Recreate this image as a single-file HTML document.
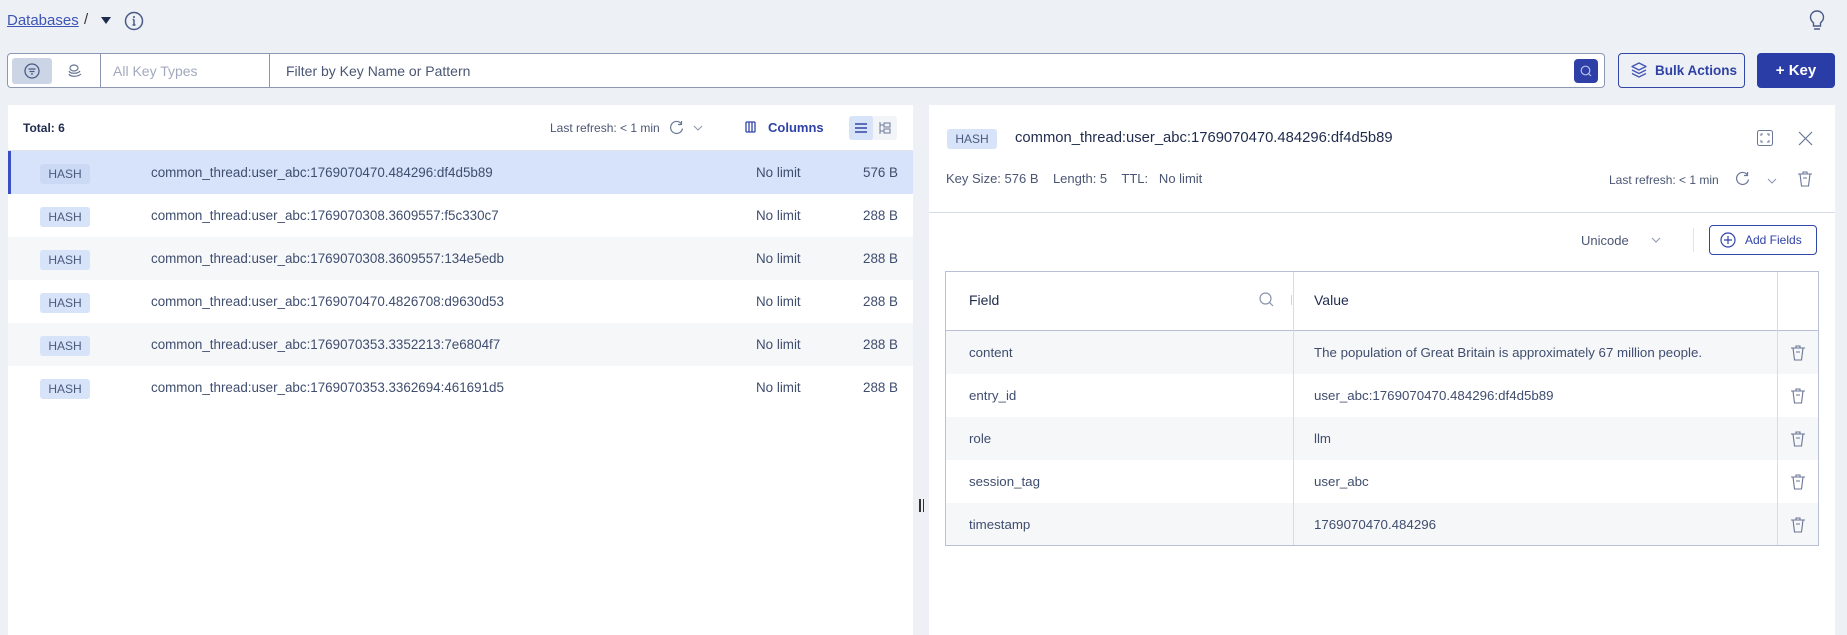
<!DOCTYPE html>
<html><head><meta charset="utf-8"><style>
*{box-sizing:border-box;margin:0;padding:0}
body{width:1847px;height:635px;background:#edf0f5;font-family:"Liberation Sans",sans-serif;color:#415073;position:relative;overflow:hidden;font-size:14px}
.a{position:absolute}
.badge{position:absolute;background:#d7e3f8;color:#4b5b7e;font-size:12px;border-radius:3px;text-align:center;line-height:20px;width:50px;height:20px}
.row{position:absolute;left:8px;width:905px;height:43px}
.row span{position:absolute;top:14px;font-size:13.4px;color:#3f4d6e}
.trow{position:absolute;left:946px;width:872px;height:43px}
.trow span{position:absolute;top:14px;font-size:13.3px;color:#3f4d6e}
svg{position:absolute;overflow:visible}
</style></head><body>
<div class="a" style="left:7px;top:12px;font-size:15px;color:#3c55b6;text-decoration:underline">Databases</div>
<div class="a" style="left:84px;top:11px;font-size:15px;color:#333">/</div>
<svg style="left:101px;top:17px" width="10" height="8"><path d="M0 0H10L5 7Z" fill="#1f2b4d"/></svg>
<svg style="left:124px;top:11px" width="20" height="20"><circle cx="10" cy="10" r="8.5" fill="none" stroke="#4a5a85" stroke-width="1.5"/><path d="M10 8.5V14M8.5 14H11.5M8.7 8.5H10" stroke="#4a5a85" stroke-width="1.5" fill="none"/><circle cx="10" cy="6" r="1" fill="#4a5a85"/></svg>
<svg style="left:1808px;top:10px" width="18" height="22"><path d="M9 1C5 1 2.5 4 2.5 7.5C2.5 10 4 11.5 5.5 13V16H12.5V13C14 11.5 15.5 10 15.5 7.5C15.5 4 13 1 9 1ZM6 19H12" stroke="#4a5a85" stroke-width="1.4" fill="none"/></svg>

<div class="a" style="left:7px;top:53px;width:1598px;height:35px;background:#fff;border:1px solid #8d97b5;border-radius:4px"></div>
<div class="a" style="left:12px;top:58px;width:40px;height:26px;background:#cbd5e5;border-radius:3px"></div>
<svg style="left:24px;top:63px" width="16" height="16"><circle cx="8" cy="8" r="7" fill="none" stroke="#4a5a85" stroke-width="1.3"/><path d="M4.5 6H11.5M5.5 8.5H10.5M7 11H9" stroke="#4a5a85" stroke-width="1.3"/></svg>
<svg style="left:67px;top:63px" width="16" height="16"><ellipse cx="7" cy="5" rx="4" ry="3" fill="none" stroke="#6a7696" stroke-width="1.2"/><path d="M2 8C3 11 11 11 13 8M2 11C3 14 11 14 14 11" stroke="#6a7696" stroke-width="1.2" fill="none"/></svg>
<div class="a" style="left:100px;top:54px;width:1px;height:33px;background:#8d97b5"></div>
<div class="a" style="left:113px;top:63px;color:#a1a9bd;font-size:14px">All Key Types</div>
<div class="a" style="left:269px;top:54px;width:1px;height:33px;background:#8d97b5"></div>
<div class="a" style="left:286px;top:63px;color:#4a5673;font-size:14px">Filter by Key Name or Pattern</div>
<div class="a" style="left:1574px;top:59px;width:24px;height:24px;background:#2e40a8;border-radius:4px"></div>
<svg style="left:1580px;top:65px" width="12" height="12"><circle cx="5.5" cy="5.5" r="4.3" fill="none" stroke="#b8c3ea" stroke-width="1.2"/><path d="M8.5 8.5L11 11" stroke="#b8c3ea" stroke-width="1.2"/></svg>
<div class="a" style="left:1618px;top:53px;width:127px;height:35px;border:1px solid #3246a6;border-radius:4px;background:#edf0f5"></div>
<svg style="left:1631px;top:62px" width="16" height="16"><path d="M8 1L15 4.5L8 8L1 4.5Z M1 8L8 11.5L15 8 M1 11.5L8 15L15 11.5" fill="none" stroke="#4556b5" stroke-width="1.3" stroke-linejoin="round"/></svg>
<div class="a" style="left:1655px;top:63px;color:#2f42a5;font-size:13.5px;font-weight:bold">Bulk Actions</div>
<div class="a" style="left:1757px;top:53px;width:78px;height:35px;background:#2a3ca6;border-radius:4px;color:#fff;font-weight:bold;font-size:15px;text-align:center;line-height:35px">+ Key</div>

<!-- left panel -->
<div class="a" style="left:8px;top:105px;width:905px;height:530px;background:#fff"></div>
<div class="a" style="left:23px;top:121px;font-size:12px;color:#1f2b4d;font-weight:bold">Total: 6</div>
<div class="a" style="left:550px;top:121px;font-size:12px;color:#4a5673">Last refresh: &lt; 1 min</div>
<svg style="left:670px;top:120px" width="14" height="14"><path d="M11.5 4A6 6 0 1 0 12.5 8.5M11.5 1V4.5H8" fill="none" stroke="#6a7696" stroke-width="1.2"/></svg>
<svg style="left:694px;top:126px" width="8" height="5"><path d="M0 0L4 4L8 0" fill="none" stroke="#8a94ad" stroke-width="1"/></svg>
<svg style="left:745px;top:121px" width="12" height="12"><path d="M1 1V11M4 1V11M7 1V11M10 1V11M1 1H10M1 11H10" fill="none" stroke="#3246a6" stroke-width="1.3"/></svg>
<div class="a" style="left:768px;top:120px;font-size:13px;color:#2f42a5;font-weight:bold">Columns</div>
<div class="a" style="left:849px;top:116px;width:48px;height:24px;background:#f3f4f7;border-radius:3px"></div>
<div class="a" style="left:849px;top:116px;width:24px;height:24px;background:#d7e3f8;border-radius:3px"></div>
<svg style="left:855px;top:122px" width="12" height="12"><path d="M0 2H12M0 6H12M0 10H12" stroke="#3246a6" stroke-width="1.5"/></svg>
<svg style="left:879px;top:122px" width="12" height="12"><path d="M1 0V12M1 3H5M1 9H5M5 1H11V5H5ZM5 7H11V11H5Z" fill="none" stroke="#6a7696" stroke-width="1"/></svg>
<div class="a" style="left:8px;top:150px;width:905px;height:1px;background:#dfe4ee"></div>

<div class="row" style="top:151px;background:#d6e3fa;border-left:3px solid #3a4fc4"><div class="badge" style="left:29px;top:13px;background:#cbd9f4">HASH</div><span style="left:140px">common_thread:user_abc:1769070470.484296:df4d5b89</span><span style="left:745px">No limit</span><span style="right:15px">576 B</span></div>
<div class="row" style="top:194px;background:#fff"><div class="badge" style="left:32px;top:13px">HASH</div><span style="left:143px">common_thread:user_abc:1769070308.3609557:f5c330c7</span><span style="left:748px">No limit</span><span style="right:15px">288 B</span></div>
<div class="row" style="top:237px;background:#f6f7f9"><div class="badge" style="left:32px;top:13px">HASH</div><span style="left:143px">common_thread:user_abc:1769070308.3609557:134e5edb</span><span style="left:748px">No limit</span><span style="right:15px">288 B</span></div>
<div class="row" style="top:280px;background:#fff"><div class="badge" style="left:32px;top:13px">HASH</div><span style="left:143px">common_thread:user_abc:1769070470.4826708:d9630d53</span><span style="left:748px">No limit</span><span style="right:15px">288 B</span></div>
<div class="row" style="top:323px;background:#f6f7f9"><div class="badge" style="left:32px;top:13px">HASH</div><span style="left:143px">common_thread:user_abc:1769070353.3352213:7e6804f7</span><span style="left:748px">No limit</span><span style="right:15px">288 B</span></div>
<div class="row" style="top:366px;background:#fff"><div class="badge" style="left:32px;top:13px">HASH</div><span style="left:143px">common_thread:user_abc:1769070353.3362694:461691d5</span><span style="left:748px">No limit</span><span style="right:15px">288 B</span></div>

<div class="a" style="left:919px;top:499px;width:1.5px;height:13px;background:#333"></div>
<div class="a" style="left:922.5px;top:499px;width:1.5px;height:13px;background:#333"></div>

<!-- right panel -->
<div class="a" style="left:929px;top:105px;width:906px;height:530px;background:#fff"></div>
<div class="badge" style="left:947px;top:129px;width:50px">HASH</div>
<div class="a" style="left:1015px;top:130px;font-size:14.8px;color:#1f2b4d">common_thread:user_abc:1769070470.484296:df4d5b89</div>
<svg style="left:1757px;top:130px" width="16" height="16"><rect x="0.5" y="0.5" width="15" height="15" rx="2" fill="none" stroke="#6a7696"/><path d="M4 6V4H6M10 4H12V6M12 10V12H10M6 12H4V10" fill="none" stroke="#6a7696"/></svg>
<svg style="left:1799px;top:132px" width="13" height="13"><path d="M0 0L13 13M13 0L0 13" stroke="#6a7696" stroke-width="1.2"/></svg>
<div class="a" style="left:946px;top:171px;font-size:13px;color:#4a5673">Key Size: 576 B &nbsp;&nbsp; Length: 5 &nbsp;&nbsp; TTL: &nbsp; No limit</div>
<div class="a" style="left:1609px;top:173px;font-size:12px;color:#4a5673">Last refresh: &lt; 1 min</div>
<svg style="left:1736px;top:171px" width="14" height="14"><path d="M11.5 4A6 6 0 1 0 12.5 8.5M11.5 1V4.5H8" fill="none" stroke="#6a7696" stroke-width="1.2"/></svg>
<svg style="left:1768px;top:179px" width="8" height="5"><path d="M0 0L4 4L8 0" fill="none" stroke="#8a94ad" stroke-width="1"/></svg>
<svg style="left:1798px;top:171px" width="14" height="16"><path d="M0 3H14M5 3V1H9V3M2 3L3.5 15H10.5L12 3M5 7H9" fill="none" stroke="#6a7696" stroke-width="1.1"/></svg>
<div class="a" style="left:929px;top:212px;width:906px;height:1px;background:#d6dcea"></div>
<div class="a" style="left:1581px;top:233px;font-size:13px;color:#4a5673">Unicode</div>
<svg style="left:1652px;top:238px" width="8" height="5"><path d="M0 0L4 4L8 0" fill="none" stroke="#8a94ad" stroke-width="1"/></svg>
<div class="a" style="left:1693px;top:228px;width:1px;height:24px;background:#dfe4ee"></div>
<div class="a" style="left:1709px;top:225px;width:108px;height:30px;border:1px solid #3246a6;border-radius:4px"></div>
<svg style="left:1720px;top:232px" width="16" height="16"><circle cx="8" cy="8" r="7" fill="none" stroke="#3246a6" stroke-width="1.2"/><path d="M8 4V12M4 8H12" stroke="#3246a6" stroke-width="1.2"/></svg>
<div class="a" style="left:1745px;top:233px;font-size:12px;color:#2f42a5">Add Fields</div>

<div class="a" style="left:969px;top:292px;font-size:14px;color:#1f2b4d">Field</div>
<svg style="left:1259px;top:292px" width="16" height="16"><circle cx="6.5" cy="6.5" r="5.5" fill="none" stroke="#8a94ad" stroke-width="1.2"/><path d="M10.5 10.5L14 14" stroke="#8a94ad" stroke-width="1.2"/></svg>
<div class="a" style="left:1291px;top:295px;width:1px;height:10px;background:#cfd5e2"></div>
<div class="a" style="left:1314px;top:292px;font-size:14px;color:#1f2b4d">Value</div>
<div class="a" style="left:946px;top:330px;width:872px;height:1px;background:#b7c0d6"></div>

<div class="trow" style="top:331px;background:#f6f7f9"><span style="left:23px">content</span><span style="left:368px">The population of Great Britain is approximately 67 million people.</span></div>
<div class="trow" style="top:374px;background:#fff"><span style="left:23px">entry_id</span><span style="left:368px">user_abc:1769070470.484296:df4d5b89</span></div>
<div class="trow" style="top:417px;background:#f6f7f9"><span style="left:23px">role</span><span style="left:368px">llm</span></div>
<div class="trow" style="top:460px;background:#fff"><span style="left:23px">session_tag</span><span style="left:368px">user_abc</span></div>
<div class="trow" style="top:503px;background:#f6f7f9"><span style="left:23px">timestamp</span><span style="left:368px">1769070470.484296</span></div>
<div class="a" style="left:1293px;top:272px;width:1px;height:273px;background:#d5dbe7"></div>
<div class="a" style="left:1777px;top:272px;width:1px;height:273px;background:#d5dbe7"></div>
<div class="a" style="left:945px;top:271px;width:874px;height:275px;border:1px solid #b7c0d6"></div>
<svg style="left:1791px;top:345px" width="14" height="16"><path d="M0 3H14M5 3V1H9V3M2 3L3.5 15H10.5L12 3M5 7H9" fill="none" stroke="#6a7696" stroke-width="1.1"/></svg>
<svg style="left:1791px;top:388px" width="14" height="16"><path d="M0 3H14M5 3V1H9V3M2 3L3.5 15H10.5L12 3M5 7H9" fill="none" stroke="#6a7696" stroke-width="1.1"/></svg>
<svg style="left:1791px;top:431px" width="14" height="16"><path d="M0 3H14M5 3V1H9V3M2 3L3.5 15H10.5L12 3M5 7H9" fill="none" stroke="#6a7696" stroke-width="1.1"/></svg>
<svg style="left:1791px;top:474px" width="14" height="16"><path d="M0 3H14M5 3V1H9V3M2 3L3.5 15H10.5L12 3M5 7H9" fill="none" stroke="#6a7696" stroke-width="1.1"/></svg>
<svg style="left:1791px;top:517px" width="14" height="16"><path d="M0 3H14M5 3V1H9V3M2 3L3.5 15H10.5L12 3M5 7H9" fill="none" stroke="#6a7696" stroke-width="1.1"/></svg>
</body></html>
